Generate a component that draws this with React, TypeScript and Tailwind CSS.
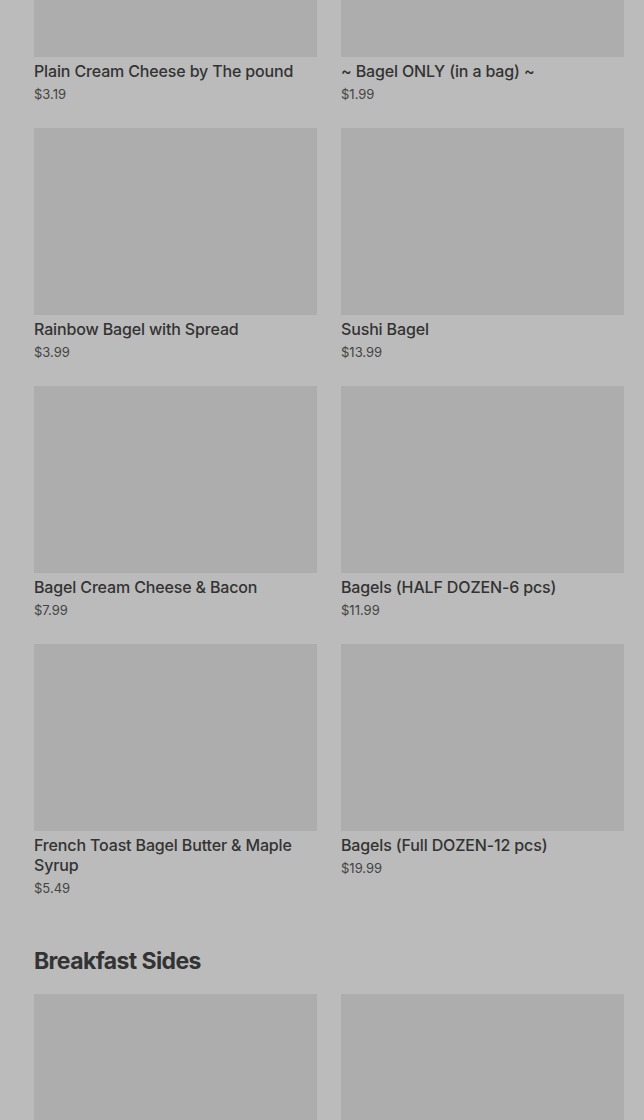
const items = [
  { name: "Plain Cream Cheese by The pound", price: "$3.19" },
  { name: "~ Bagel ONLY (in a bag) ~", price: "$1.99" },
  { name: "Rainbow Bagel with Spread", price: "$3.99" },
  { name: "Sushi Bagel", price: "$13.99" },
  { name: "Bagel Cream Cheese & Bacon", price: "$7.99" },
  { name: "Bagels (HALF DOZEN-6 pcs)", price: "$11.99" },
  { name: "French Toast Bagel Butter & Maple Syrup", price: "$5.49" },
  { name: "Bagels (Full DOZEN-12 pcs)", price: "$19.99" },
];

function ItemCard({ name, price }: { name: string; price: string }) {
  return (
    <div className="flex flex-col">
      <div className="h-[187px] bg-[#adadad]" />
      <p className="mt-1 text-base font-medium leading-5 tracking-[-0.15px] text-[#333333]">{name}</p>
      <p className="mt-[5px] text-[13px] leading-4 text-[#444444]">{price}</p>
    </div>
  );
}

export default function App() {
  return (
    <div
      className="h-[1120px] overflow-hidden bg-[#bbbbbb] pl-[34px] pr-[20px]"
      style={{ fontFamily: "Inter, 'Noto Sans', sans-serif" }}
    >
      <div className="-mt-[130px] grid grid-cols-2 gap-x-6 gap-y-[26px]">
        {items.map((it) => (
          <ItemCard key={it.name} {...it} />
        ))}
      </div>

      <h2 className="mt-[49px] text-[23px] font-bold leading-8 tracking-[-0.6px] text-[#333333]">
        Breakfast Sides
      </h2>
      <div className="mt-[17px] grid grid-cols-2 gap-x-6">
        <div className="h-[187px] bg-[#adadad]" />
        <div className="h-[187px] bg-[#adadad]" />
      </div>
    </div>
  );
}
